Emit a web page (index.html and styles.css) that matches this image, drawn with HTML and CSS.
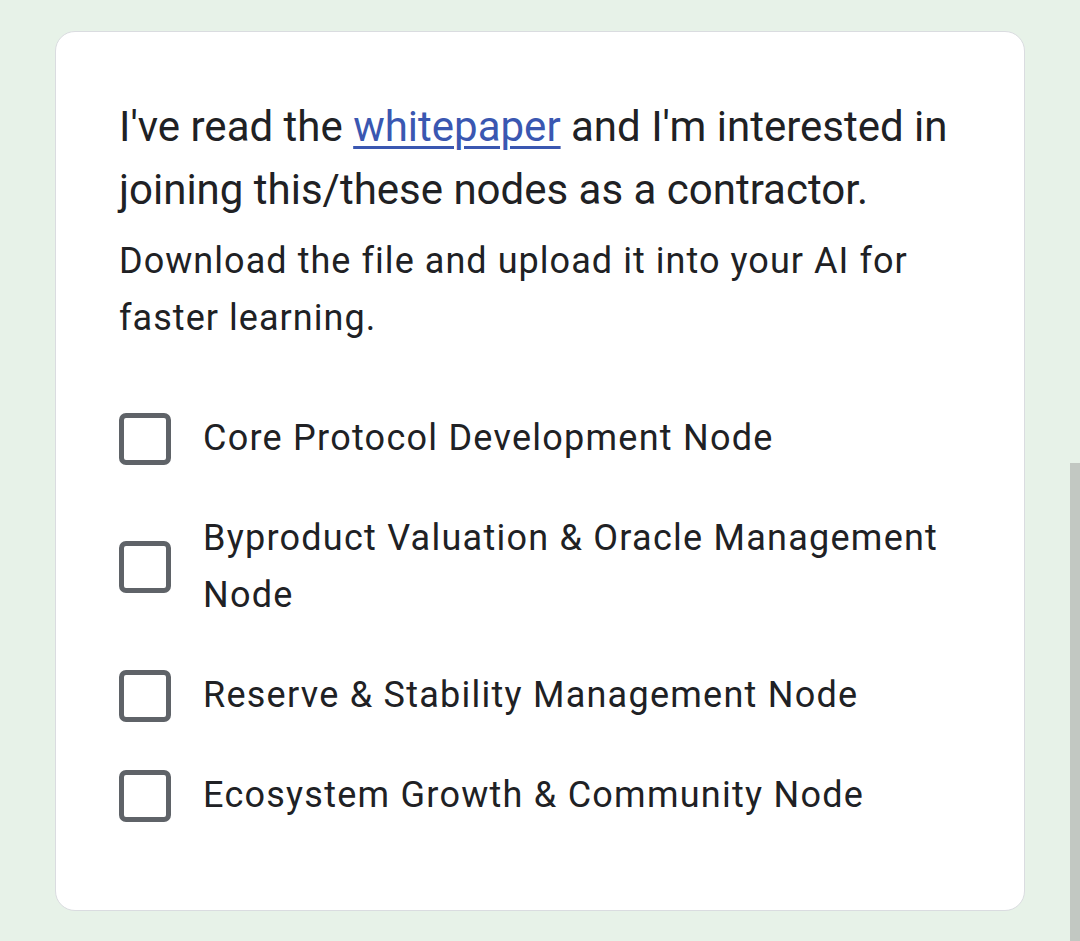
FILE: index.html
```html
<!DOCTYPE html>
<html lang="en">
<head>
<meta charset="utf-8">
<title>Form question</title>
<link rel="stylesheet" href="styles.css">
</head>
<body>
<div class="page">
  <div class="card">
    <div class="title">I've read the <a href="#" class="link">whitepaper</a> and I'm interested in joining this/these nodes as a contractor.</div>
    <div class="desc">Download the file and upload it into your AI for faster learning.</div>
    <div class="options">
      <label class="option"><span class="box"></span><span class="label">Core Protocol Development Node</span></label>
      <label class="option"><span class="box"></span><span class="label">Byproduct Valuation &amp; Oracle Management Node</span></label>
      <label class="option"><span class="box"></span><span class="label">Reserve &amp; Stability Management Node</span></label>
      <label class="option"><span class="box"></span><span class="label">Ecosystem Growth &amp; Community Node</span></label>
    </div>
  </div>
</div>
<div class="scrollbar"></div>
</body>
</html>
```

FILE: styles.css
```css
html, body {
  margin: 0;
  padding: 0;
  background: #e7f2e8;
  height: 100%;
  overflow: hidden;
}
body {
  font-family: Roboto, "Liberation Sans", Arial, sans-serif;
  color: #202124;
}
.page {
  padding: 31px 0 0 55px;
}
.card {
  box-sizing: border-box;
  width: 970px;
  background: #ffffff;
  border: 1px solid #dadce0;
  border-radius: 20px;
  padding: 63px 63px 65px 63px;
}
.title {
  font-size: 42px;
  line-height: 63px;
  letter-spacing: 0;
}
.link {
  color: #3a57b1;
  text-decoration: underline;
  text-decoration-thickness: 3px;
  text-underline-offset: 5px;
}
.desc {
  margin-top: 12px;
  font-size: 36px;
  line-height: 57px;
  letter-spacing: 1.05px;
}
.options {
  margin-top: 41px;
  display: flex;
  flex-direction: column;
}
.option {
  display: flex;
  align-items: center;
  padding: 22px 0 21px 0;
}
.box {
  flex: none;
  box-sizing: border-box;
  width: 52px;
  height: 52px;
  border: 5px solid #5f6368;
  border-radius: 7px;
  margin-right: 32px;
}
.label {
  font-size: 36px;
  line-height: 57px;
  letter-spacing: 1.25px;
}
.scrollbar {
  position: absolute;
  left: 1070px;
  top: 463px;
  width: 10px;
  height: 478px;
  background: #c2c8c2;
}
```
